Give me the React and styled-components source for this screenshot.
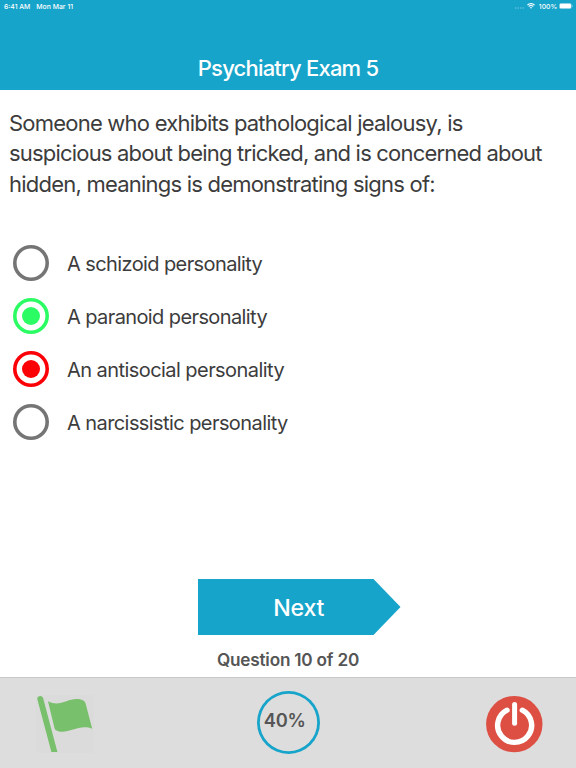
import React from "react";
import styled, { createGlobalStyle } from "styled-components";

const GlobalStyle = createGlobalStyle`
  body {
    margin: 0;
    background: #fff;
    font-family: Inter, "Liberation Sans", sans-serif;
    color: #3c3c3c;
  }
`;

const Screen = styled.div`
  width: 576px;
  height: 768px;
  display: flex;
  flex-direction: column;
  overflow: hidden;
`;

const Header = styled.header`
  height: 90px;
  flex: none;
  background: #17a4ca;
  color: white;
`;

const StatusBar = styled.div`
  display: flex;
  align-items: center;
  height: 12px;
  padding: 0 3px 0 4px;
  font-size: 6.8px;
  font-weight: 500;
  white-space: pre;
`;

const StatusDate = styled.span`
  margin-left: 6px;
  letter-spacing: 0.05px;
`;

const StatusRight = styled.div`
  display: flex;
  align-items: center;
  margin-left: auto;
`;

const Title = styled.h1`
  margin: 0;
  padding-top: 42px;
  text-align: center;
  font-size: 22px;
  line-height: 28px;
  font-weight: 550;
  letter-spacing: -0.8px;
`;

const Question = styled.p`
  margin: 0;
  padding: 18px 0 0 9px;
  font-size: 22px;
  line-height: 30.4px;
`;

const Line = styled.span`
  display: block;
  white-space: nowrap;
  letter-spacing: ${props => props.spacing}px;
`;

const Options = styled.div`
  padding: 37.7px 0 0 12.5px;
`;

const Option = styled.div`
  display: flex;
  align-items: center;
  height: 52.8px;
  font-size: 20px;
`;

const Radio = styled.span`
  display: flex;
  align-items: center;
  justify-content: center;
  flex: none;
  width: 36px;
  height: 36px;
  margin-right: 18.5px;
  border-radius: 50%;
  box-shadow: inset 0 0 0 3.6px ${props => props.color};
`;

const Dot = styled.span`
  width: 18px;
  height: 18px;
  border-radius: 50%;
  background: ${props => props.color};
`;

const OptionText = styled.span`
  padding-top: 2px;
  white-space: nowrap;
  letter-spacing: ${props => props.spacing}px;
`;

const Bottom = styled.div`
  margin-top: auto;
  flex: none;
`;

const NextButton = styled.button`
  display: block;
  width: 202.5px;
  height: 56px;
  margin-left: 198px;
  padding: 1px 1px 0 0;
  border: none;
  background: #17a4ca;
  clip-path: polygon(0 0, 175.5px 0, 100% 50%, 175.5px 100%, 0 100%);
  color: white;
  font-family: inherit;
  font-size: 23.2px;
  font-weight: 550;
  letter-spacing: -0.2px;
`;

const Progress = styled.div`
  height: 42px;
  line-height: 49px;
  text-align: center;
  font-size: 17.2px;
  font-weight: 600;
  letter-spacing: -0.22px;
  color: #555;
`;

const Footer = styled.footer`
  box-sizing: border-box;
  display: flex;
  justify-content: space-between;
  height: 91px;
  border-top: 1px solid #c8c8c8;
  background: #ddd;
`;

const FlagButton = styled.div`
  padding: 17px 0 0 36px;
  width: 58px;
`;

const Score = styled.div`
  box-sizing: border-box;
  width: 63px;
  height: 63px;
  margin: 13px 0 0 -3px;
  padding-right: 6.5px;
  border-radius: 50%;
  box-shadow: inset 0 0 0 2.8px #17a4ca;
  line-height: 59px;
  text-align: center;
  font-size: 18.3px;
  font-weight: 600;
  letter-spacing: -0.2px;
  color: #555;
`;

const PowerButton = styled.div`
  padding: 17px 33px 0 0;
`;

const WifiIcon = () => (
  <svg width="8" height="6" viewBox="0 0 8 6" fill="none" stroke="white">
    <path d="M0.4 2.1a5.1 5.1 0 0 1 7.2 0M1.7 3.5a3.25 3.25 0 0 1 4.6 0" strokeWidth="1.1" />
    <path d="M4 5.8L2.9 4.6a1.6 1.6 0 0 1 2.2 0z" fill="white" stroke="none" />
  </svg>
);

const BatteryIcon = () => (
  <svg width="14" height="6" viewBox="0 0 14 6">
    <rect x="0.2" y="0.2" width="12.4" height="5.6" rx="1.6" fill="white" opacity="0.5" />
    <rect x="0.9" y="0.8" width="11" height="4.4" rx="1" fill="white" />
    <path d="M13 2v2c0.9-0.3 0.9-1.7 0-2z" fill="white" opacity="0.6" />
  </svg>
);

const FlagIcon = () => (
  <svg width="58" height="58" viewBox="0 0 58 58" display="block">
    <rect width="58" height="58" fill="#dbdbdb" />
    <path d="M1.4 4.6C0.4 0.6 6 -0.6 7.1 3.1L21.4 57H15.4z" fill="#78c06b" />
    <path
      d="M12 6.3C25.5 13.5 34.5-0.3 47.3 5.6Q49.2 6.5 49.8 9.2L56.2 33.8C42.5 28 31 41 20 35.3Q18.9 34.7 18.4 32.7z"
      fill="#78c06b"
    />
  </svg>
);

const PowerIcon = () => (
  <svg width="58" height="58" viewBox="485 695 58 58" display="block" fill="none" stroke="white" strokeLinecap="round">
    <circle cx="514.3" cy="724.1" r="28.2" fill="#dd4f43" stroke="none" />
    <path d="M507 710.2A17 17 0 1 0 522.3 710.2" strokeWidth="5.4" />
    <path d="M514.6 704.5V723.2" strokeWidth="5" />
  </svg>
);

const lines = [
  { text: "Someone who exhibits pathological jealousy, is", spacing: -0.78 },
  { text: "suspicious about being tricked, and is concerned about", spacing: -0.81 },
  { text: "hidden, meanings is demonstrating signs of:", spacing: -0.78 },
];

const options = [
  { text: "A schizoid personality", color: "#757575", spacing: -0.6 },
  { text: "A paranoid personality", color: "#2cfc64", checked: true, spacing: -0.6 },
  { text: "An antisocial personality", color: "#fb0007", checked: true, spacing: -0.56 },
  { text: "A narcissistic personality", color: "#757575", spacing: -0.58 },
];

const App = () => {
  return (
    <Screen>
      <GlobalStyle />
      <Header>
        <StatusBar>
          <span>6:41 AM</span>
          <StatusDate>Mon Mar 11</StatusDate>
          <StatusRight>
            <svg width="13" height="6">
              <path d="M1 5h9" stroke="white" strokeDasharray="1.5 1" opacity="0.4" />
            </svg>
            <WifiIcon />
            <span>  100% </span>
            <BatteryIcon />
          </StatusRight>
        </StatusBar>
        <Title>Psychiatry Exam 5</Title>
      </Header>
      <Question>
        {lines.map(line => (
          <Line key={line.text} spacing={line.spacing}>{line.text}</Line>
        ))}
      </Question>
      <Options>
        {options.map(option => (
          <Option key={option.text}>
            <Radio color={option.color}>
              {option.checked && <Dot color={option.color} />}
            </Radio>
            <OptionText spacing={option.spacing}>{option.text}</OptionText>
          </Option>
        ))}
      </Options>
      <Bottom>
        <NextButton>Next</NextButton>
        <Progress>Question 10 of 20</Progress>
        <Footer>
          <FlagButton>
            <FlagIcon />
          </FlagButton>
          <Score>40%</Score>
          <PowerButton>
            <PowerIcon />
          </PowerButton>
        </Footer>
      </Bottom>
    </Screen>
  );
};

export default App;
